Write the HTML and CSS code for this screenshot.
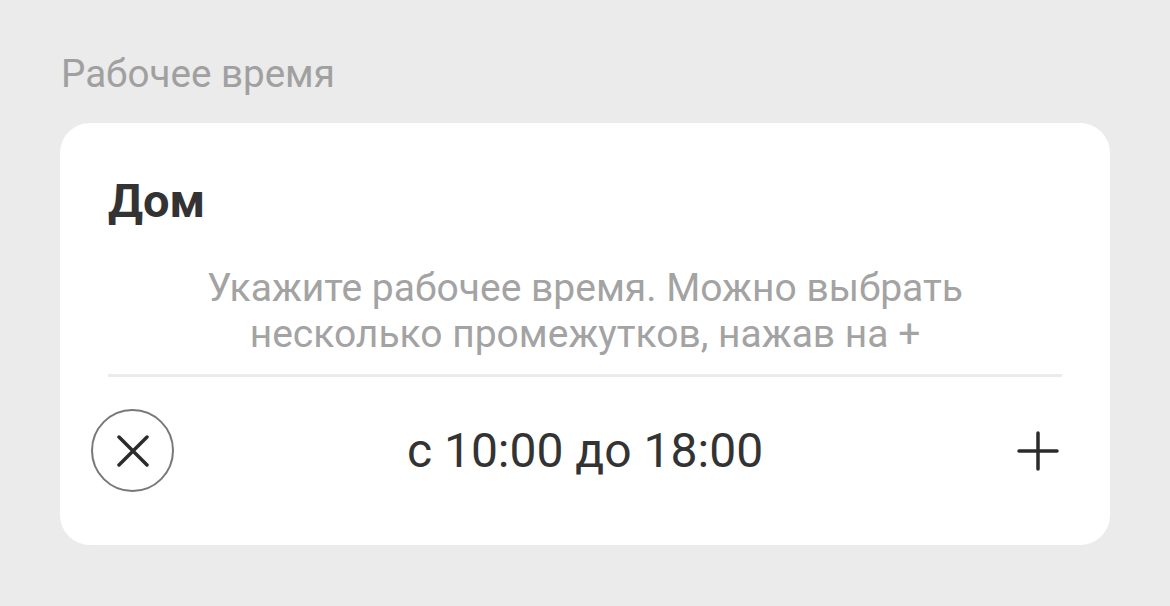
FILE: index.html
```html
<!DOCTYPE html>
<html lang="ru">
<head>
    <meta charset="UTF-8">
    <meta name="viewport" content="width=device-width, initial-scale=1.0">
    <title>Рабочее время</title>
    <link rel="stylesheet" href="styles.css">
</head>
<body>

    <!-- Section title -->
    <h2 class="section-title">Рабочее время</h2>

    <!-- Schedule card -->
    <div class="card">
        <h3 class="card-title">Дом</h3>
        <p class="card-hint">Укажите рабочее время. Можно выбрать<br>несколько промежутков, нажав на +</p>

        <div class="interval">
            <button class="icon-btn remove-btn" aria-label="Удалить">
                <svg width="32" height="32" viewBox="0 0 32 32">
                    <path d="M2 2 L30 30 M30 2 L2 30" stroke="#2b2b2b" stroke-width="3.5" stroke-linecap="round" fill="none"/>
                </svg>
            </button>
            <span class="interval-time">с 10:00 до 18:00</span>
            <button class="icon-btn add-btn" aria-label="Добавить">
                <svg width="42" height="40" viewBox="0 0 42 40">
                    <path d="M21 2 L21 38 M2 20 L40 20" stroke="#2b2b2b" stroke-width="3.5" stroke-linecap="round" fill="none"/>
                </svg>
            </button>
        </div>
    </div>

</body>
</html>
```

FILE: styles.css
```css
/* General Reset */
body {
    margin: 0;
    padding: 52px 60px 0;
    font-family: Roboto, "Noto Sans", sans-serif;
    background-color: #EBEBEB;
    color: #333333;
}
.section-title {
    margin: 0 0 27px 1px;
    font-size: 38.6px;
    font-weight: 400;
    line-height: 44px;
    color: #A0A0A0;
}
.card {
    background-color: white;
    border-radius: 30px;
    padding: 50px 48px 0;
    height: 372px;
}
.card-title {
    margin: 0;
    font-size: 47px;
    font-weight: 700;
    line-height: 56px;
    color: #333333;
}
.card-hint {
    margin: 36px 0 0;
    padding-bottom: 17px;
    border-bottom: 3px solid #EBEBEB;
    text-align: center;
    font-size: 39px;
    line-height: 46px;
    color: #A3A3A3;
}
.interval {
    display: grid;
    grid-template-columns: 1fr auto 1fr;
    align-items: center;
    margin-top: 32px;
}
.icon-btn {
    display: flex;
    align-items: center;
    justify-content: center;
    background: none;
    border: none;
    padding: 0;
    cursor: pointer;
}
.remove-btn {
    justify-self: start;
    width: 83px;
    height: 83px;
    margin-left: -17px;
    border: 2.5px solid #787878;
    border-radius: 50%;
    box-sizing: border-box;
}
.add-btn {
    justify-self: end;
    width: 44px;
    height: 44px;
    margin-right: 2px;
}
.interval-time {
    font-size: 48px;
    line-height: 56px;
    color: #333333;
}
```
